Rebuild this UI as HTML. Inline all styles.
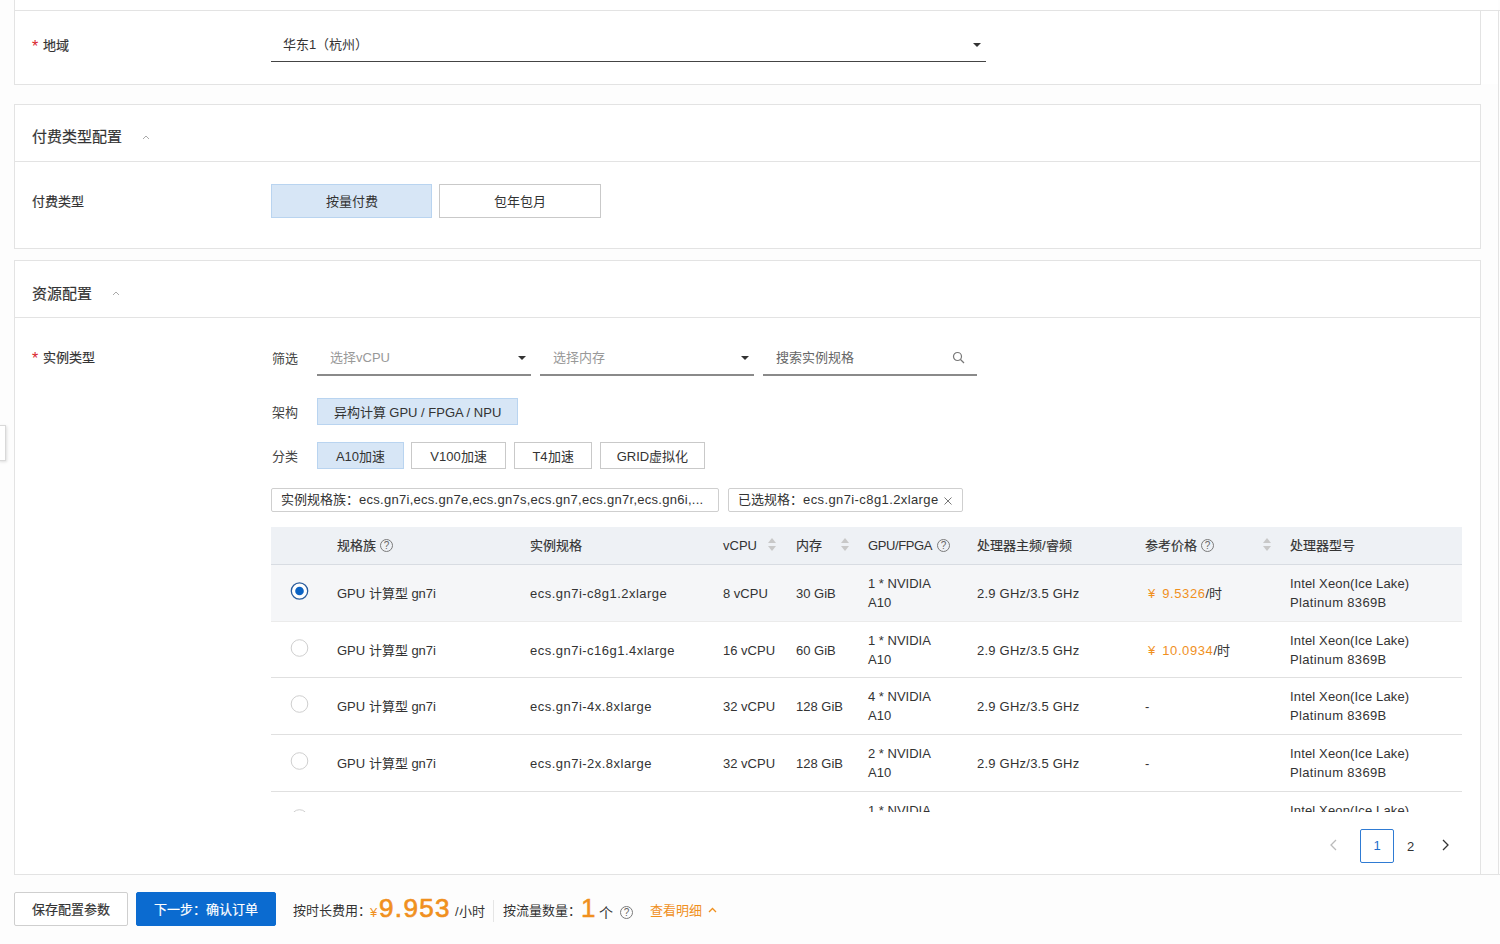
<!DOCTYPE html>
<html lang="zh-CN"><head><meta charset="utf-8">
<style>
*{box-sizing:border-box;margin:0;padding:0}
html,body{width:1500px;height:944px;overflow:hidden;background:#fdfdfd;font-family:"Liberation Sans",sans-serif;color:#333;font-size:13px}
.a{position:absolute}
.ln{position:absolute;background:#e3e3e3}
.fill{position:absolute;background:#fff}
.t{position:absolute;white-space:nowrap;line-height:1}
.md{-webkit-text-stroke:0.18px currentColor}
.req{color:#d9262b;font-size:16px}
.btn{position:absolute;border:1px solid #c9c9c9;background:#fff;display:flex;align-items:center;justify-content:center;white-space:nowrap;color:#333;font-size:13px}
.sel{background:#d7e6f6;border-color:#b9d4f0}
.ul{position:absolute;height:2px;background:#8a8a8a}
.tri{position:absolute;width:0;height:0;border-left:4px solid transparent;border-right:4px solid transparent;border-top:4px solid #333}
.ph{color:#999}
.tag{position:absolute;height:24px;border:1px solid #cfcfcf;border-radius:2px;background:#fff;white-space:nowrap;font-size:13px;line-height:22px;padding-left:9px;color:#333}
.th{position:absolute;top:539px;white-space:nowrap;line-height:14px;font-size:13px}
.th.md{-webkit-text-stroke:0.15px currentColor}
.row{position:absolute;left:271px;width:1191px;height:57px;border-bottom:1px solid #e0e0e0}
.c{position:absolute;white-space:nowrap;font-size:13px;line-height:19px;color:#333}
.radio{position:absolute;width:17.5px;height:17.5px;border:1px solid #c9c9c9;border-radius:50%;background:#fff}
.radio.on{border:1.3px solid #2a5c9c}
.radio.on::after{content:"";position:absolute;left:3.1px;top:3.3px;width:8.7px;height:8.7px;border-radius:50%;background:#0b63c4}
.q{position:absolute;width:13px;height:13px;border:1px solid #7a7a7a;border-radius:50%;font-size:10px;line-height:11px;text-align:center;color:#666}
.sort{position:absolute;width:8px;height:14px}
.sort::before{content:"";position:absolute;left:0;top:0;border-left:4px solid transparent;border-right:4px solid transparent;border-bottom:5px solid #c8c8c8}
.sort::after{content:"";position:absolute;left:0;top:8px;border-left:4px solid transparent;border-right:4px solid transparent;border-top:5px solid #c8c8c8}
.org{color:#f0901e}
</style></head><body>

<!-- fills -->
<div class="fill" style="left:15px;top:0;width:1483px;height:84px"></div>
<div class="fill" style="left:15px;top:105px;width:1465px;height:143px"></div>
<div class="fill" style="left:15px;top:261px;width:1465px;height:613px"></div>


<!-- lines -->
<div class="ln" style="left:14px;top:0;width:1px;height:85px"></div>
<div class="ln" style="left:14px;top:10px;width:1486px;height:1px"></div>
<div class="ln" style="left:1498px;top:10px;width:1px;height:865px"></div>
<div class="ln" style="left:1480px;top:10px;width:1px;height:75px"></div>
<div class="ln" style="left:14px;top:84px;width:1467px;height:1px"></div>

<div class="ln" style="left:14px;top:104px;width:1467px;height:1px"></div>
<div class="ln" style="left:14px;top:104px;width:1px;height:145px"></div>
<div class="ln" style="left:1480px;top:104px;width:1px;height:145px"></div>
<div class="ln" style="left:14px;top:248px;width:1467px;height:1px"></div>
<div class="ln" style="left:15px;top:161px;width:1465px;height:1px"></div>

<div class="ln" style="left:14px;top:260px;width:1467px;height:1px"></div>
<div class="ln" style="left:14px;top:260px;width:1px;height:615px"></div>
<div class="ln" style="left:1480px;top:260px;width:1px;height:615px"></div>
<div class="ln" style="left:15px;top:317px;width:1465px;height:1px"></div>
<div class="ln" style="left:14px;top:874px;width:1486px;height:1px"></div>

<!-- panel 1 content -->
<div class="t req" style="left:32px;top:39px">*</div><div class="t md" style="left:43px;top:39px">地域</div>
<div class="t" style="left:283px;top:38px">华东1（杭州）</div>
<div class="ul" style="left:271px;top:61px;width:715px;height:1px;background:#444"></div>
<div class="tri" style="left:973px;top:43px"></div>

<!-- panel 2 content -->
<div class="t md" style="left:32px;top:129px;font-size:15px">付费类型配置</div>
<svg class="a" style="left:142px;top:134px" width="8" height="6" viewBox="0 0 8 6"><path d="M1 5 L4 2 L7 5" fill="none" stroke="#aaa" stroke-width="1"/></svg>
<div class="t md" style="left:32px;top:195px">付费类型</div>
<div class="btn sel" style="left:271px;top:184px;width:161px;height:34px;padding-bottom:2px">按量付费</div>
<div class="btn" style="left:439px;top:184px;width:162px;height:34px;padding-bottom:2px">包年包月</div>

<!-- panel 3 content -->
<div class="t md" style="left:32px;top:286px;font-size:15px">资源配置</div>
<svg class="a" style="left:112px;top:290px" width="8" height="6" viewBox="0 0 8 6"><path d="M1 5 L4 2 L7 5" fill="none" stroke="#aaa" stroke-width="1"/></svg>
<div class="t req" style="left:32px;top:351px">*</div><div class="t md" style="left:43px;top:351px">实例类型</div>

<div class="t" style="left:272px;top:352px;color:#444">筛选</div>
<div class="t ph" style="left:330px;top:351px">选择vCPU</div>
<div class="tri" style="left:518px;top:356px"></div>
<div class="ul" style="left:317px;top:374px;width:214px"></div>
<div class="t ph" style="left:553px;top:351px">选择内存</div>
<div class="tri" style="left:741px;top:356px"></div>
<div class="ul" style="left:540px;top:374px;width:214px"></div>
<div class="t" style="left:776px;top:351px;color:#666">搜索实例规格</div>
<svg class="a" style="left:952px;top:351px" width="13" height="13" viewBox="0 0 13 13"><circle cx="5.5" cy="5.5" r="4" fill="none" stroke="#777" stroke-width="1.2"/><path d="M8.5 8.5 L12 12" stroke="#777" stroke-width="1.3"/></svg>
<div class="ul" style="left:763px;top:374px;width:214px"></div>

<div class="t" style="left:272px;top:406px;color:#444">架构</div>
<div class="btn sel" style="left:317px;top:398px;width:201px;height:27px">异构计算 GPU / FPGA / NPU</div>
<div class="t" style="left:272px;top:450px;color:#444">分类</div>
<div class="btn sel" style="left:317px;top:442px;width:87px;height:27px">A10加速</div>
<div class="btn" style="left:411px;top:442px;width:95px;height:27px">V100加速</div>
<div class="btn" style="left:514px;top:442px;width:78px;height:27px">T4加速</div>
<div class="btn" style="left:600px;top:442px;width:105px;height:27px">GRID虚拟化</div>

<div class="tag" style="left:271px;top:488px;width:448px">实例规格族：<span style="letter-spacing:0.28px">ecs.gn7i,ecs.gn7e,ecs.gn7s,ecs.gn7,ecs.gn7r,ecs.gn6i,...</span></div>
<div class="tag" style="left:728px;top:488px;width:235px">已选规格：<span style="letter-spacing:0.4px">ecs.gn7i-c8g1.2xlarge</span></div>
<svg class="a" style="left:944px;top:497px" width="8" height="8" viewBox="0 0 8 8"><path d="M0.5 0.5 L7.5 7.5 M7.5 0.5 L0.5 7.5" stroke="#777" stroke-width="1"/></svg>

<!-- table -->
<div class="a" style="left:271px;top:527px;width:1191px;height:38px;background:#eef1f5;border-bottom:1px solid #d8dce2"></div>
<div class="th md" style="left:337px">规格族</div><div class="q" style="left:380px;top:539px">?</div>
<div class="th md" style="left:530px">实例规格</div>
<div class="th" style="left:723px">vCPU</div><div class="sort" style="left:768px;top:538px"></div>
<div class="th md" style="left:796px">内存</div><div class="sort" style="left:841px;top:538px"></div>
<div class="th" style="left:868px;letter-spacing:-0.4px">GPU/FPGA</div><div class="q" style="left:937px;top:539px">?</div>
<div class="th md" style="left:977px">处理器主频/睿频</div>
<div class="th md" style="left:1145px">参考价格</div><div class="q" style="left:1201px;top:539px">?</div><div class="sort" style="left:1263px;top:538px"></div>
<div class="th md" style="left:1290px">处理器型号</div>

<div class="a" style="left:271px;top:565px;width:1191px;height:247px;overflow:hidden">
 <div style="position:absolute;left:0;top:0;width:1191px;height:57px;background:#f5f6f8;border-bottom:1px solid #ebebeb"></div>
 <div style="position:absolute;left:0;top:57px;width:1191px;height:56px;border-bottom:1px solid #e0e0e0"></div>
 <div style="position:absolute;left:0;top:113px;width:1191px;height:57px;border-bottom:1px solid #e0e0e0"></div>
 <div style="position:absolute;left:0;top:170px;width:1191px;height:57px;border-bottom:1px solid #e0e0e0"></div>
 <div style="position:absolute;left:0;top:227px;width:1191px;height:57px"></div>
<svg class="a" style="left:19px;top:16px" width="20" height="20" viewBox="0 0 20 20"><circle cx="9.5" cy="10" r="8.2" fill="#fff" stroke="#2a5c9c" stroke-width="1.3"/><circle cx="9.5" cy="10" r="4.3" fill="#0b63c4"/></svg>
<div class="c" style="left:66px;top:19px">GPU 计算型 gn7i</div>
<div class="c" style="left:259px;top:19px;letter-spacing:0.48px">ecs.gn7i-c8g1.2xlarge</div>
<div class="c" style="left:452px;top:19px">8 vCPU</div>
<div class="c" style="left:525px;top:19px">30 GiB</div>
<div class="c" style="left:597px;top:9px">1 * NVIDIA<br>A10</div>
<div class="c" style="left:706px;top:19px;letter-spacing:0.23px">2.9 GHz/3.5 GHz</div>
<div class="c" style="left:874px;top:19px"><span class="org" style="margin-left:3px">¥</span><span class="org" style="margin-left:7px;letter-spacing:0.6px">9.5326</span>/时</div>
<div class="c" style="left:1019px;top:9px;letter-spacing:0.15px">Intel Xeon(Ice Lake)<br><span style="letter-spacing:0.34px">Platinum 8369B</span></div>
<svg class="a" style="left:19px;top:73px" width="20" height="20" viewBox="0 0 20 20"><circle cx="9.5" cy="10" r="8.3" fill="#fff" stroke="#cfcfcf" stroke-width="1"/></svg>
<div class="c" style="left:66px;top:76px">GPU 计算型 gn7i</div>
<div class="c" style="left:259px;top:76px;letter-spacing:0.48px">ecs.gn7i-c16g1.4xlarge</div>
<div class="c" style="left:452px;top:76px">16 vCPU</div>
<div class="c" style="left:525px;top:76px">60 GiB</div>
<div class="c" style="left:597px;top:66px">1 * NVIDIA<br>A10</div>
<div class="c" style="left:706px;top:76px;letter-spacing:0.23px">2.9 GHz/3.5 GHz</div>
<div class="c" style="left:874px;top:76px"><span class="org" style="margin-left:3px">¥</span><span class="org" style="margin-left:7px;letter-spacing:0.6px">10.0934</span>/时</div>
<div class="c" style="left:1019px;top:66px;letter-spacing:0.15px">Intel Xeon(Ice Lake)<br><span style="letter-spacing:0.34px">Platinum 8369B</span></div>
<svg class="a" style="left:19px;top:129px" width="20" height="20" viewBox="0 0 20 20"><circle cx="9.5" cy="10" r="8.3" fill="#fff" stroke="#cfcfcf" stroke-width="1"/></svg>
<div class="c" style="left:66px;top:132px">GPU 计算型 gn7i</div>
<div class="c" style="left:259px;top:132px;letter-spacing:0.48px">ecs.gn7i-4x.8xlarge</div>
<div class="c" style="left:452px;top:132px">32 vCPU</div>
<div class="c" style="left:525px;top:132px">128 GiB</div>
<div class="c" style="left:597px;top:122px">4 * NVIDIA<br>A10</div>
<div class="c" style="left:706px;top:132px;letter-spacing:0.23px">2.9 GHz/3.5 GHz</div>
<div class="c" style="left:874px;top:132px">-</div>
<div class="c" style="left:1019px;top:122px;letter-spacing:0.15px">Intel Xeon(Ice Lake)<br><span style="letter-spacing:0.34px">Platinum 8369B</span></div>
<svg class="a" style="left:19px;top:186px" width="20" height="20" viewBox="0 0 20 20"><circle cx="9.5" cy="10" r="8.3" fill="#fff" stroke="#cfcfcf" stroke-width="1"/></svg>
<div class="c" style="left:66px;top:189px">GPU 计算型 gn7i</div>
<div class="c" style="left:259px;top:189px;letter-spacing:0.48px">ecs.gn7i-2x.8xlarge</div>
<div class="c" style="left:452px;top:189px">32 vCPU</div>
<div class="c" style="left:525px;top:189px">128 GiB</div>
<div class="c" style="left:597px;top:179px">2 * NVIDIA<br>A10</div>
<div class="c" style="left:706px;top:189px;letter-spacing:0.23px">2.9 GHz/3.5 GHz</div>
<div class="c" style="left:874px;top:189px">-</div>
<div class="c" style="left:1019px;top:179px;letter-spacing:0.15px">Intel Xeon(Ice Lake)<br><span style="letter-spacing:0.34px">Platinum 8369B</span></div>
<svg class="a" style="left:19px;top:243px" width="20" height="20" viewBox="0 0 20 20"><circle cx="9.5" cy="10" r="8.3" fill="#fff" stroke="#cfcfcf" stroke-width="1"/></svg>
<div class="c" style="left:66px;top:246px">GPU 计算型 gn7i</div>
<div class="c" style="left:259px;top:246px;letter-spacing:0.48px">ecs.gn7i-c32g1.8xlarge</div>
<div class="c" style="left:452px;top:246px">32 vCPU</div>
<div class="c" style="left:525px;top:246px">188 GiB</div>
<div class="c" style="left:597px;top:236px">1 * NVIDIA<br>A10</div>
<div class="c" style="left:706px;top:246px;letter-spacing:0.23px">2.9 GHz/3.5 GHz</div>
<div class="c" style="left:874px;top:246px">-</div>
<div class="c" style="left:1019px;top:236px;letter-spacing:0.15px">Intel Xeon(Ice Lake)<br><span style="letter-spacing:0.34px">Platinum 8369B</span></div>
</div>

<!-- pagination -->
<svg class="a" style="left:1329px;top:839px" width="10" height="12" viewBox="0 0 10 12"><path d="M7 1 L2 6 L7 11" fill="none" stroke="#bbb" stroke-width="1.3"/></svg>
<div class="a" style="left:1360px;top:829px;width:34px;height:34px;border:1px solid #2f7bd3;border-radius:2px;color:#1f6fcb;font-size:13px;line-height:32px;text-align:center">1</div>
<div class="t" style="left:1407px;top:840px;font-size:13px">2</div>
<svg class="a" style="left:1440px;top:839px" width="10" height="12" viewBox="0 0 10 12"><path d="M3 1 L8 6 L3 11" fill="none" stroke="#333" stroke-width="1.3"/></svg>

<!-- footer -->
<div class="btn md" style="left:14px;top:892px;width:114px;height:34px;border-radius:2px;border-color:#cfcfcf;padding-bottom:1px">保存配置参数</div>
<div class="btn md" style="left:136px;top:892px;width:140px;height:34px;border-radius:2px;background:#0b6bd0;border-color:#0b6bd0;color:#fff;padding-bottom:1px">下一步：确认订单</div>
<div class="t" style="left:293px;top:904px">按时长费用：</div>
<div class="t org" style="left:370px;top:906px;font-size:13px">¥</div>
<div class="t org" style="left:379px;top:895px;font-size:26px;-webkit-text-stroke:0.7px currentColor;letter-spacing:1.35px">9.953</div>
<div class="t" style="left:455px;top:905px">/小时</div>
<div class="a" style="left:493px;top:900px;width:1px;height:22px;background:#e5e5e5"></div>
<div class="t" style="left:503px;top:904px">按流量数量：</div>
<div class="t org" style="left:581px;top:895px;font-size:26px;-webkit-text-stroke:0.5px currentColor">1</div>
<div class="t" style="left:599px;top:906px;font-size:14px">个</div>
<div class="q" style="left:620px;top:906px">?</div>
<div class="t org" style="left:650px;top:904px">查看明细</div>
<svg class="a" style="left:708px;top:907px" width="9" height="6" viewBox="0 0 9 6"><path d="M1 5 L4.5 1.5 L8 5" fill="none" stroke="#f0901e" stroke-width="1.3"/></svg>

<!-- left tab -->
<div class="a" style="left:-2px;top:425px;width:8px;height:36px;background:#fff;border:1px solid #d9d9d9;box-shadow:1px 1px 3px rgba(0,0,0,.12)"></div>

</body></html>
